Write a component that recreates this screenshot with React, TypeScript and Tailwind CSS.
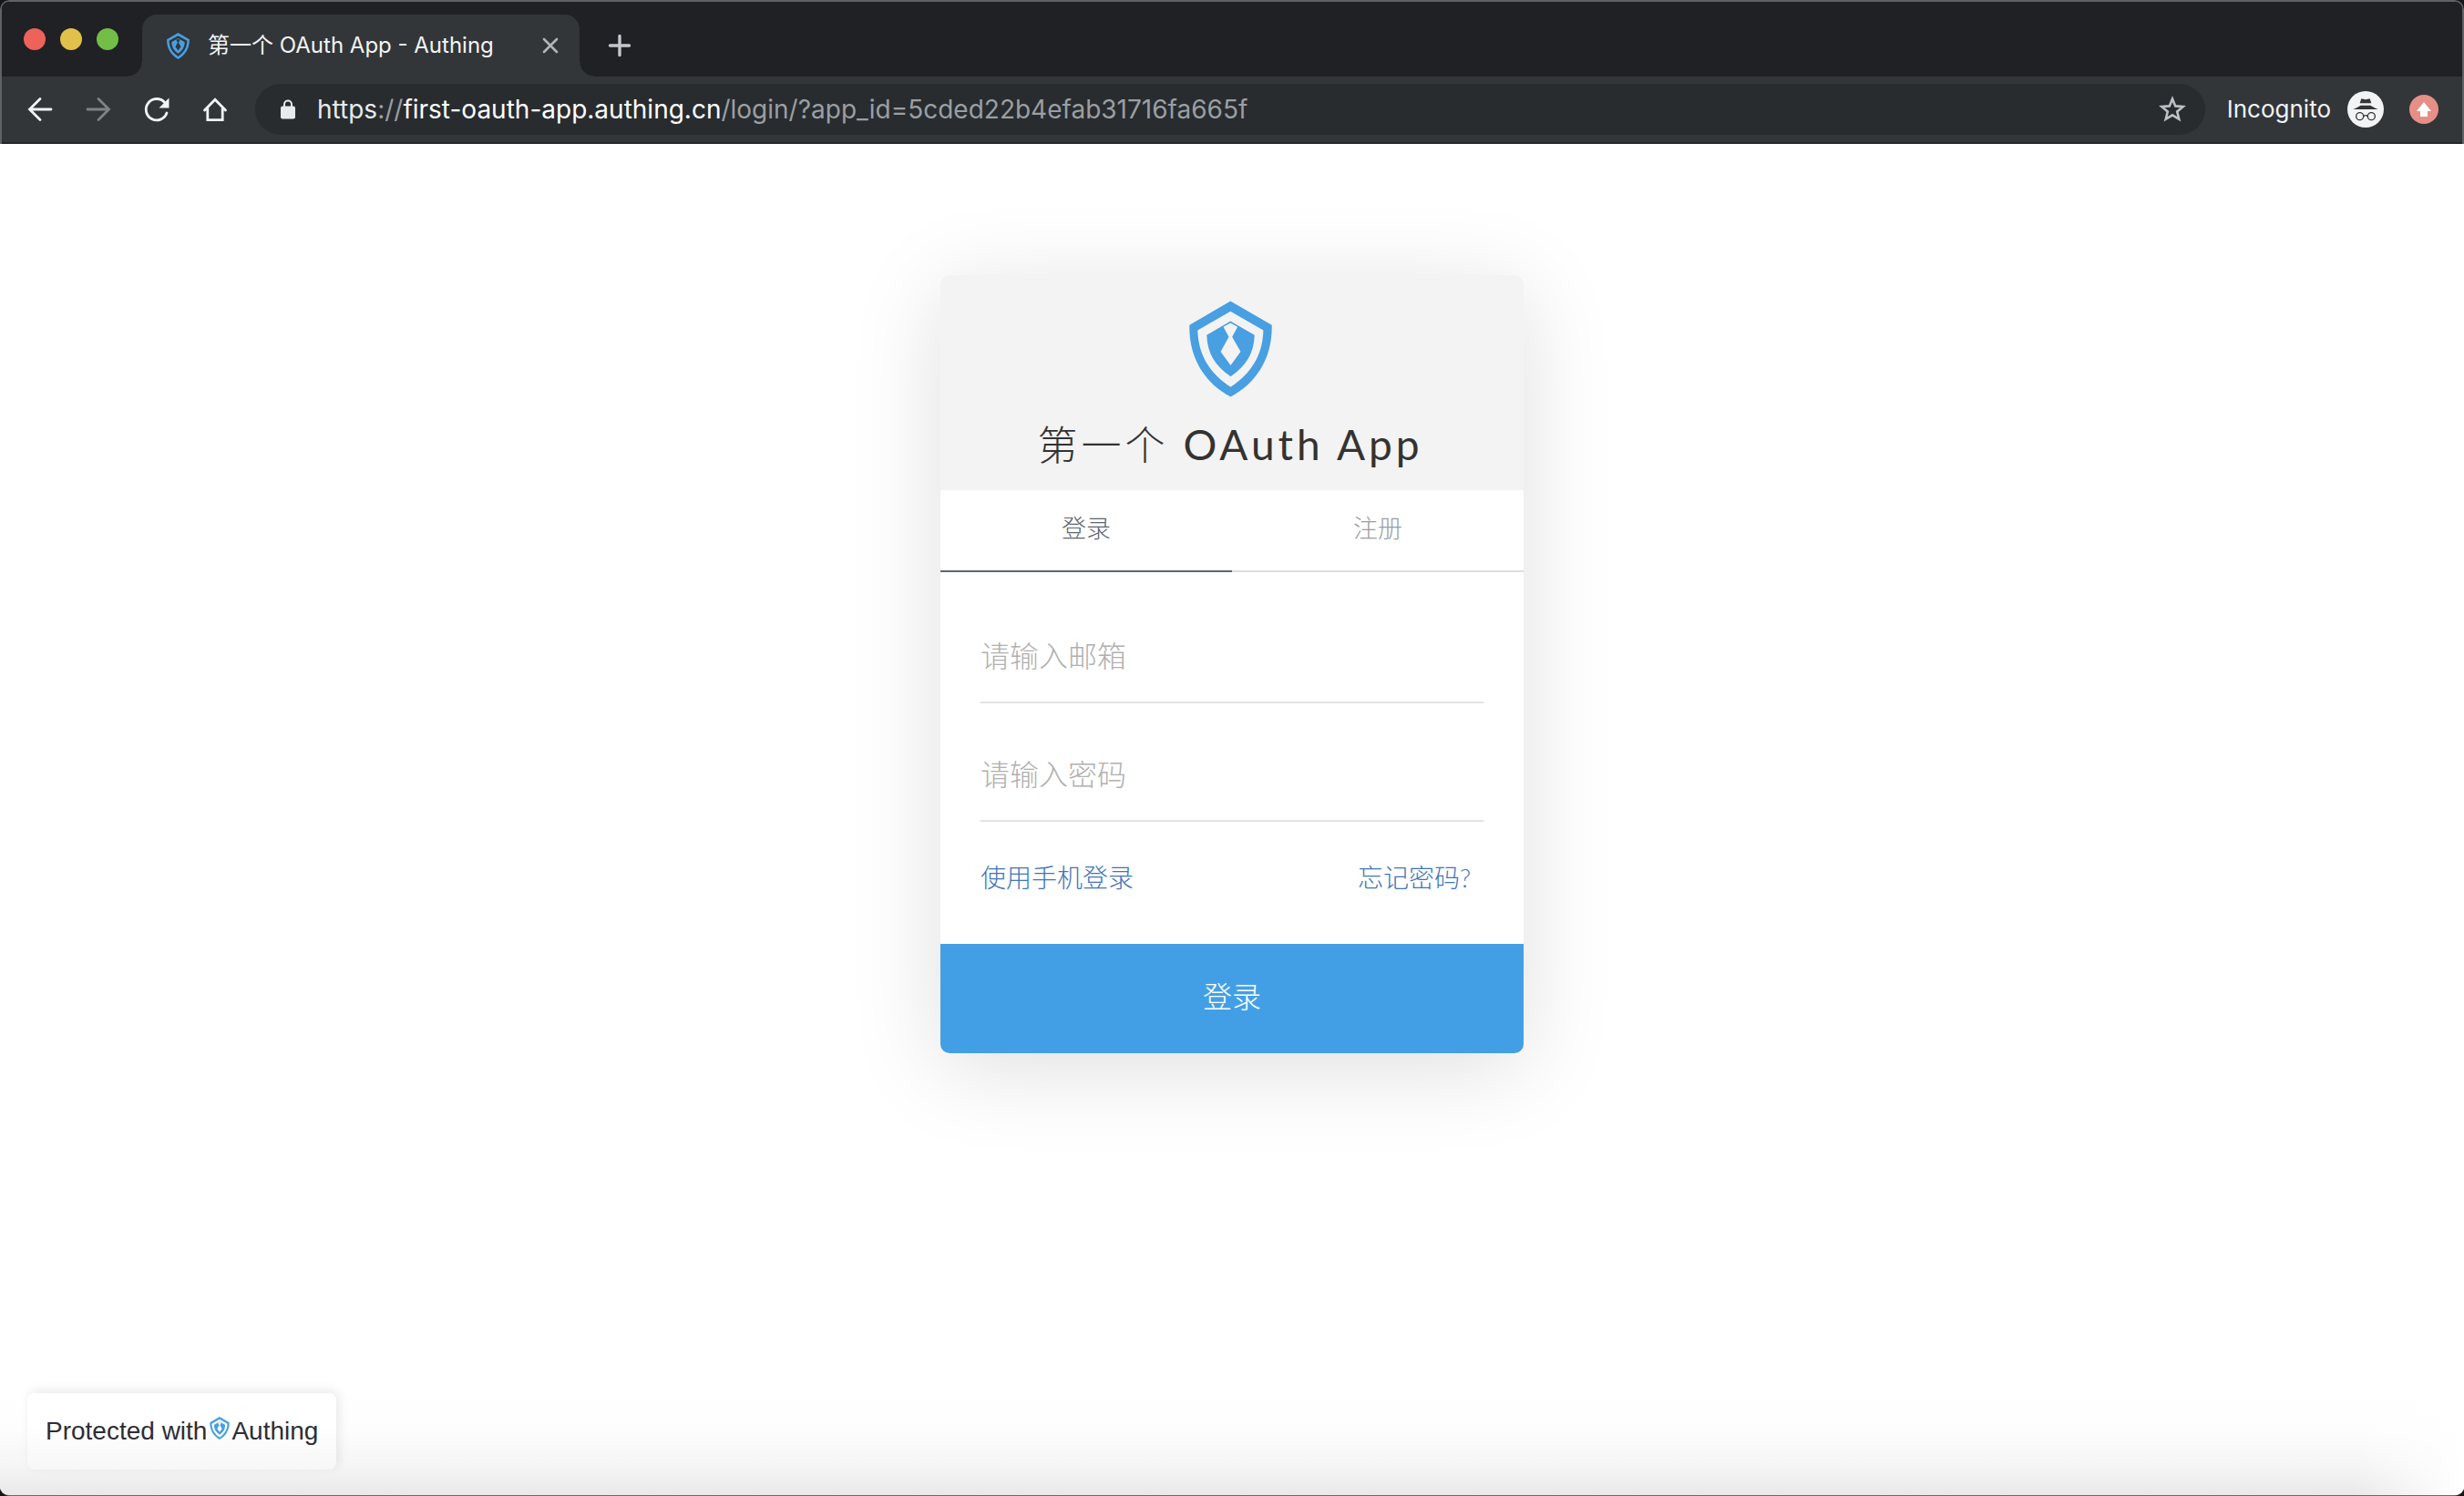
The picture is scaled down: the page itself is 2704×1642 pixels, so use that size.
import React from "react";

function Shield({ className }: { className: string }) {
  return (
    <svg viewBox="74 60 274 318" className={className} fill="#489fe1" fillRule="evenodd" aria-hidden="true">
      <path d="M210.500 61L347 140C350 250 294 334 211 377C128 334 72 250 75 140ZM210.500 95L102 157C104 241 144 300 211 345C278 300 317 241 319 157Z" />
      <path d="M210.500 127L290 173C288 234 262 275 211 310C160 275 134 234 132 173ZM210.500 133L187 146L205 179L178 228L211 273L244 228L216 179L234 146Z" />
    </svg>
  );
}

function TabStrip() {
  return (
    <div className="flex h-[82px] items-end bg-[#202124]">
      <div className="flex h-[82px] items-start gap-4 pl-6 pt-[29px]">
        <button aria-label="Close window" className="size-6 rounded-full bg-[#ed6359]" />
        <button aria-label="Minimize window" className="size-6 rounded-full bg-[#e1c04c]" />
        <button aria-label="Zoom window" className="size-6 rounded-full bg-[#72be47]" />
      </div>
      <div className="ml-[10px] size-4 bg-[radial-gradient(circle_at_0_0,#202124_15px,#323639_16px)]" />
      <div className="flex h-[68px] w-[480px] items-center rounded-t-2xl bg-[#323639] pl-[27px] pr-[22px]">
        <Shield className="h-[29px] w-[25px]" />
        <span className="ml-5 flex-1 whitespace-nowrap text-[24px] leading-8 text-[#f3f4f4]">第一个 OAuth App - Authing</span>
        <button aria-label="Close tab" className="flex size-5 items-center justify-center">
          <svg viewBox="0 0 20 20" className="size-5" stroke="#b3b5b7" strokeWidth="2.600" strokeLinecap="round">
            <path d="M3 3L17 17M17 3L3 17" />
          </svg>
        </button>
      </div>
      <div className="size-4 bg-[radial-gradient(circle_at_100%_0,#202124_15px,#323639_16px)]" />
      <button aria-label="New tab" className="mb-[18px] ml-3 flex size-8 items-center justify-center">
        <svg viewBox="0 0 32 32" className="size-8" stroke="#c3c7cb" strokeWidth="3.400" strokeLinecap="round">
          <path d="M16 5.500V26.500M5.500 16H26.500" />
        </svg>
      </button>
    </div>
  );
}

function NavButton({ label, children }: { label: string; children: React.ReactNode }) {
  return (
    <button aria-label={label} className="flex size-12 shrink-0 items-center justify-center">
      <svg viewBox="0 0 32 32" className="size-8" fill="none" strokeWidth="2.800" strokeLinecap="round" stroke="#f1f3f4">
        {children}
      </svg>
    </button>
  );
}

function Toolbar() {
  return (
    <div className="flex h-[74px] items-center border-b-2 border-[#25272a] bg-[#323639] pl-[18px] pr-[26px]">
      <div className="flex gap-4">
        <NavButton label="Back">
          <path d="M28 16H5M16 4.500L4.500 16L16 27.500" />
        </NavButton>
        <NavButton label="Forward">
          <path d="M4 16H27M16 4.500L27.500 16L16 27.500" stroke="#808386" />
        </NavButton>
        <NavButton label="Reload">
          <path d="M27 20A11.700 11.700 0 1 1 24.500 8.200" />
          <path d="M29.500 3.500V14.500H18.500Z" fill="#f1f3f4" stroke="none" />
        </NavButton>
        <NavButton label="Home">
          <path d="M4.500 17L16 5.200L27.500 17M7.800 15V27.700H24.200V15" />
        </NavButton>
      </div>
      <div className="ml-5 flex h-14 min-w-0 flex-1 items-center rounded-full bg-[#282c2f] pl-7 pr-5">
        <svg viewBox="0 0 16 22" className="h-[22px] w-4" aria-hidden="true">
          <path d="M4 10V5.500A4 4 0 0 1 12 5.500V10" fill="none" stroke="#e8eaed" strokeWidth="2" />
          <rect y="7.500" width="16" height="14" rx="2" fill="#e8eaed" />
        </svg>
        <div className="ml-6 flex-1 whitespace-nowrap text-[28px] leading-10 text-[#9b9fa2]">
          <span className="text-[#e8eaed]">https</span>://<span className="text-white">first-oauth-app.authing.cn</span>/login/?app_id=5cded22b4efab31716fa665f
        </div>
        <button aria-label="Bookmark this page" className="size-8">
          <svg viewBox="0 0 32 32" className="size-8" fill="none" stroke="#bdc1c5" strokeWidth="2.600">
            <path d="M16 4.500L19.200 12.400L27.700 13L21.200 18.500L23.300 26.800L16 22.300L8.700 26.800L10.800 18.500L4.300 13L12.800 12.400Z" />
          </svg>
        </button>
      </div>
      <span className="ml-6 text-[26px] leading-10 text-[#f1f3f4]">Incognito</span>
      <svg viewBox="0 0 120 120" className="ml-[18px] size-10" aria-hidden="true">
        <circle cx="60" cy="60" r="60" fill="#f1f3f4" />
        <g fill="#323639">
          <path d="M46 25Q60 30 74 25L79 40H41Z" />
          <path d="M44 47H76Q82 51 101 60H19Q38 51 44 47Z" />
        </g>
        <g fill="none" stroke="#323639" strokeWidth="4">
          <circle cx="41" cy="83" r="12" />
          <circle cx="79" cy="83" r="12" />
          <path d="M53 82Q60 78 67 82" />
        </g>
      </svg>
      <button aria-label="Update available" className="ml-7 size-8">
        <svg viewBox="0 0 96 96" className="size-8">
          <circle cx="48" cy="48" r="48" fill="#e58f87" />
          <path d="M48 24L72 54H60V72H36V54H24Z" fill="#fff" />
        </svg>
      </button>
    </div>
  );
}

function Field({ label, type }: { label: string; type: string }) {
  return (
    <input
      type={type}
      aria-label={label}
      placeholder={label}
      className="h-[104px] w-full border-b-2 border-[#e3e3e3] bg-transparent text-[32px] font-light text-[#333333] outline-none placeholder:text-[#b0b0b0]"
    />
  );
}

function LoginCard() {
  return (
    <form
      onSubmit={(e) => e.preventDefault()}
      className="mx-auto mt-36 w-[640px] overflow-hidden rounded-[10px] bg-white font-[Lato,'Noto_Sans_CJK_SC',sans-serif] shadow-[0_16px_100px_rgba(0,0,0,0.13)]"
    >
      <div className="flex flex-col items-center bg-[#f3f3f3] pb-[22px] pr-1 pt-7">
        <Shield className="h-[106px] w-[91px]" />
        <h1 className="mt-6 whitespace-nowrap text-[44px] font-light leading-[56px] tracking-[4px] text-[#333333]">
          第一个 <span className="text-[46px] font-normal">OAuth App</span>
        </h1>
      </div>
      <div role="tablist" className="grid grid-cols-2 text-[27px] font-light">
        <button type="button" role="tab" aria-selected="true" className="h-[90px] border-b-2 border-[#5c666f] pb-1 text-[#5c666f]">
          登录
        </button>
        <button type="button" role="tab" aria-selected="false" className="h-[90px] border-b-2 border-[#dddddd] pb-1 text-[#9a9c9f]">
          注册
        </button>
      </div>
      <div className="flex flex-col gap-[26px] px-11 pt-10">
        <Field label="请输入邮箱" type="email" />
        <Field label="请输入密码" type="password" />
      </div>
      <div className="flex justify-between pb-[52px] pl-11 pr-[58px] pt-10 text-[28px] font-light leading-[42px] text-[#3f76b6]">
        <a href="#phone">使用手机登录</a>
        <a href="#forgot">忘记密码?</a>
      </div>
      <button type="submit" className="h-[120px] w-full bg-[#439fe5] pb-1 text-[32px] font-light text-white">
        登录
      </button>
    </form>
  );
}

export default function App() {
  return (
    <div className="min-h-screen bg-[#15161c]">
      <div className="flex min-h-screen flex-col overflow-hidden rounded-[10px] border-b border-[#6a6a6a] font-[Inter,'Noto_Sans_CJK_SC',sans-serif]">
        <header className="overflow-hidden rounded-t-[10px] border-x-2 border-t-2 border-[#5f6366] bg-[#202124]">
          <TabStrip />
          <Toolbar />
        </header>
        <main className="flex flex-1 flex-col bg-white bg-[linear-gradient(to_left,#ffffff,transparent_120px),linear-gradient(to_top,#e9e9e9,#f5f5f5_32px,#fdfdfd_70px,#ffffff_110px)]">
          <LoginCard />
          <a
            href="#authing"
            className="mb-7 ml-[30px] mt-auto flex h-[84px] items-center self-start rounded-lg bg-linear-to-b from-white from-40% to-[#f7f7f7] px-5 font-['Liberation_Sans',sans-serif] text-[28px] leading-8 text-[#2d2d35] shadow-[3px_-3px_12px_rgba(0,0,0,0.09)]"
          >
            <span>Protected with</span>
            <Shield className="mb-2 ml-[3px] mr-[2px] h-[25px] w-[22px]" />
            <span>Authing</span>
          </a>
        </main>
      </div>
    </div>
  );
}
